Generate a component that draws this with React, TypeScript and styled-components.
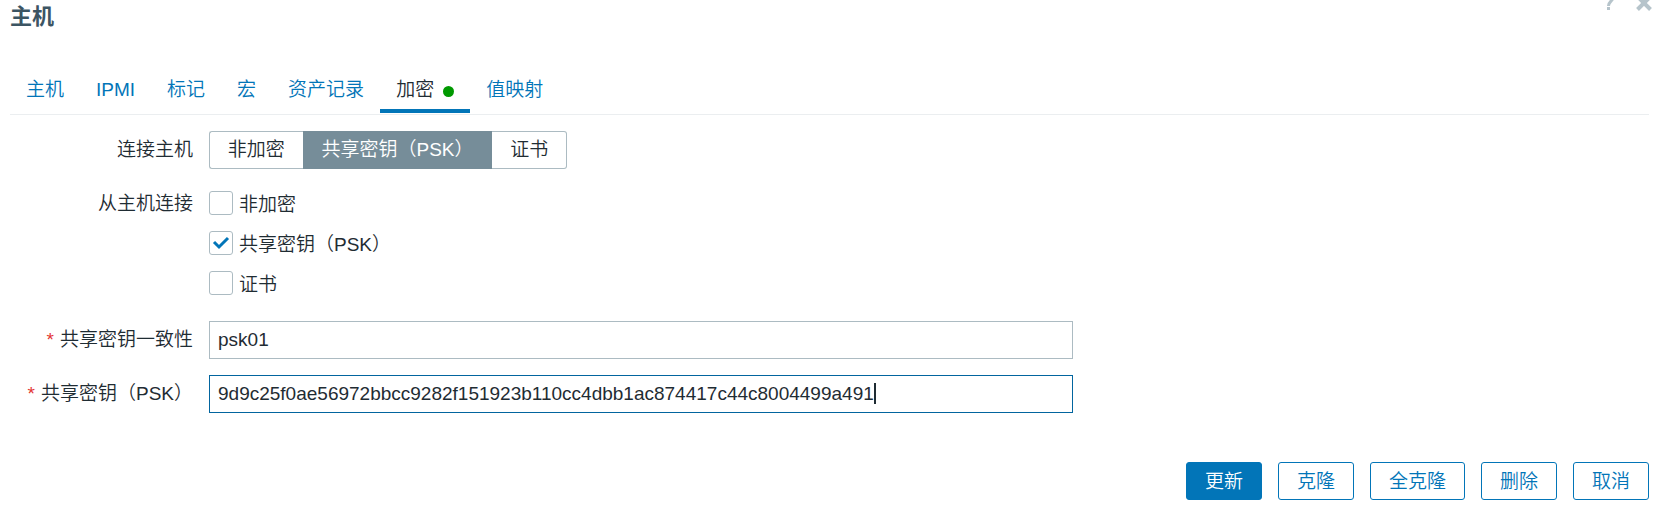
import React, { useLayoutEffect, useRef, useState } from "react";
import styled, { createGlobalStyle, css } from "styled-components";

const Global = createGlobalStyle`
  *, *::before, *::after { box-sizing: border-box; }
  body {
    margin: 0;
    background: #ffffff;
    color: #1f2c33;
    font: 350 19px/24px "Liberation Sans", "Noto Sans CJK SC", sans-serif;
  }
  button, input { font: inherit; color: inherit; }
`;

const Dialog = styled.main`
  display: flow-root;
  padding: 0 8px 8px 10px;
`;

const Header = styled.header`
  display: flex;
  justify-content: space-between;
  align-items: flex-start;
  height: 72px;
`;

const Title = styled.h1`
  margin: 0;
  padding-top: 1px;
  font-size: 22px;
  line-height: 32px;
  font-weight: 700;
  color: #3c5563;
`;

const HeaderTools = styled.div`
  display: flex;
  gap: 16px;
  margin: -8px -6px 0 0;
`;

const IconButton = styled.button`
  display: flex;
  padding: 0;
  border: 0;
  background: none;
  color: #b6c4cb;
  cursor: pointer;
`;

const Tabs = styled.nav`
  display: flex;
  height: 43px;
  border-bottom: 1px solid #ebeef0;
`;

const Tab = styled.a<{ $active?: boolean }>`
  display: flex;
  align-items: center;
  gap: 9px;
  height: 41px;
  padding: 0 16px 6px;
  color: #0275b8;
  text-decoration: none;
  white-space: nowrap;
  ${(p) =>
    p.$active &&
    css`
      padding-bottom: 2px;
      border-bottom: 4px solid #0275b8;
      color: #1f2c33;
    `}
`;

const Dot = styled.span`
  width: 11px;
  height: 11px;
  margin-top: 4px;
  border-radius: 50%;
  background: #009900;
`;

const Form = styled.form`
  padding-top: 16px;
`;

const Row = styled.div`
  display: grid;
  grid-template-columns: 183px minmax(0, 864px);
  column-gap: 16px;
  margin-bottom: 16px;
`;

const Label = styled.label`
  display: flex;
  justify-content: flex-end;
  height: 38px;
  align-items: center;
  white-space: nowrap;
`;

const Star = styled.span`
  margin-right: 6px;
  color: #e33734;
`;

const Segments = styled.div`
  display: flex;
  width: 358px;
  height: 38px;
`;

const Segment = styled.button<{ $on?: boolean }>`
  flex: 1 1 auto;
  padding: 0 17px;
  border: 1px solid #acbbc2;
  background: #ffffff;
  white-space: nowrap;
  cursor: pointer;
  &:first-child { border-right: 0; border-radius: 3px 0 0 3px; }
  &:last-child { border-left: 0; border-radius: 0 3px 3px 0; }
  ${(p) =>
    p.$on &&
    css`
      border-color: #768d99;
      background: #768d99;
      color: #ffffff;
    `}
`;

const CheckList = styled.div`
  display: grid;
  gap: 4px;
  padding-bottom: 4px;
`;

const Check = styled.label`
  display: flex;
  align-items: center;
  gap: 6px;
  height: 36px;
`;

const CheckText = styled.span`
  padding-top: 3px;
`;

const CheckBoxWrap = styled.span`
  display: grid;
  width: 24px;
  height: 24px;
  > * { grid-area: 1 / 1; }
  svg { visibility: hidden; pointer-events: none; }
  input:checked + svg { visibility: visible; }
`;

const CheckInput = styled.input`
  appearance: none;
  width: 24px;
  height: 24px;
  margin: 0;
  border: 1px solid #acbbc2;
  border-radius: 3px;
  background: #ffffff;
`;

const TextInput = styled.input`
  width: 100%;
  height: 38px;
  padding: 0 8px;
  border: 1px solid #acbbc2;
  border-radius: 0;
  outline: 0;
  background: #ffffff;
  caret-color: transparent;
  &:focus { border-color: #02659f; }
`;

const Field = styled.div`
  position: relative;
  display: flex;
`;

const Caret = styled.span`
  position: absolute;
  top: 8px;
  width: 2px;
  height: 21px;
  background: #1f2c33;
  pointer-events: none;
`;

const Footer = styled.footer`
  display: flex;
  justify-content: flex-end;
  gap: 16px;
  padding-top: 33px;
`;

const Button = styled.button<{ $primary?: boolean }>`
  height: 38px;
  padding: 1px 18px 0;
  border: 1px solid #0275b8;
  border-radius: 3px;
  background: ${(p) => (p.$primary ? "#0275b8" : "#ffffff")};
  color: ${(p) => (p.$primary ? "#ffffff" : "#0275b8")};
  white-space: nowrap;
  cursor: pointer;
`;

const MODES = ["非加密", "共享密钥（PSK）", "证书"];
const TABS = ["主机", "IPMI", "标记", "宏", "资产记录", "加密", "值映射"];

/* Text box with a two-pixel caret drawn at the insertion point. */
function CaretInput({ id, initial, focus }: { id: string; initial: string; focus?: boolean }) {
  const ref = useRef<HTMLInputElement>(null);
  const [caret, setCaret] = useState<number | null>(null);

  const place = () => {
    const el = ref.current;
    if (!el) return;
    const ctx = document.createElement("canvas").getContext("2d");
    if (!ctx) return;
    const style = getComputedStyle(el);
    ctx.font = `${style.fontSize} ${style.fontFamily}`;
    const before = el.value.slice(0, el.selectionStart ?? el.value.length);
    setCaret(Math.round(ctx.measureText(before).width) + 9 - el.scrollLeft);
  };

  useLayoutEffect(() => {
    const el = ref.current;
    if (!focus || !el) return;
    el.focus();
    el.setSelectionRange(el.value.length, el.value.length);
    place();
  }, [focus]);

  return (
    <Field>
      <TextInput
        ref={ref}
        id={id}
        defaultValue={initial}
        onSelect={place}
        onInput={place}
        onBlur={() => setCaret(null)}
      />
      {caret !== null && <Caret style={{ left: caret }} />}
    </Field>
  );
}

export default function App() {
  const [mode, setMode] = useState(1);
  return (
    <>
      <Global />
      <Dialog>
        <Header>
          <Title>主机</Title>
          <HeaderTools>
            <IconButton type="button" aria-label="帮助">
              <svg width="20" height="20" viewBox="0 0 20 20" fill="none" stroke="currentColor" strokeWidth="3">
                <path d="M4.500 5.500C5 2.500 7 1.500 9.500 1.500C12.500 1.500 14 3.500 14 5.500C14 9 9.500 9.500 9.500 14M9.500 15V18" />
              </svg>
            </IconButton>
            <IconButton type="button" aria-label="关闭">
              <svg width="20" height="20" viewBox="0 0 20 20" fill="none" stroke="currentColor" strokeWidth="4">
                <path d="M2.500 4.500L15.500 17.500M15.500 4.500L2.500 17.500" />
              </svg>
            </IconButton>
          </HeaderTools>
        </Header>
        <Tabs>
          {TABS.map((t) => (
            <Tab key={t} href="#" $active={t === "加密"}>
              {t}
              {t === "加密" && <Dot />}
            </Tab>
          ))}
        </Tabs>
        <Form onSubmit={(e) => e.preventDefault()}>
          <Row>
            <Label as="span" id="connect-label">连接主机</Label>
            <Segments role="group" aria-labelledby="connect-label">
              {MODES.map((m, i) => (
                <Segment key={m} type="button" $on={mode === i} aria-pressed={mode === i} onClick={() => setMode(i)}>
                  {m}
                </Segment>
              ))}
            </Segments>
          </Row>
          <Row>
            <Label as="span" id="accept-label">从主机连接</Label>
            <CheckList role="group" aria-labelledby="accept-label">
              {MODES.map((m, i) => (
                <Check key={m}>
                  <CheckBoxWrap>
                    <CheckInput type="checkbox" defaultChecked={i === 1} />
                    <svg width="24" height="24" viewBox="0 0 24 24" fill="none" stroke="#0275b8" strokeWidth="3">
                      <path d="M5 11L10 16L19 7" />
                    </svg>
                  </CheckBoxWrap>
                  <CheckText>{m}</CheckText>
                </Check>
              ))}
            </CheckList>
          </Row>
          <Row>
            <Label htmlFor="psk-id"><Star>*</Star>共享密钥一致性</Label>
            <CaretInput id="psk-id" initial="psk01" />
          </Row>
          <Row>
            <Label htmlFor="psk"><Star>*</Star>共享密钥（PSK）</Label>
            <CaretInput
              id="psk"
              focus
              initial="9d9c25f0ae56972bbcc9282f151923b110cc4dbb1ac874417c44c8004499a491"
            />
          </Row>
          <Footer>
            <Button $primary type="submit">更新</Button>
            <Button type="button">克隆</Button>
            <Button type="button">全克隆</Button>
            <Button type="button">删除</Button>
            <Button type="button">取消</Button>
          </Footer>
        </Form>
      </Dialog>
    </>
  );
}
